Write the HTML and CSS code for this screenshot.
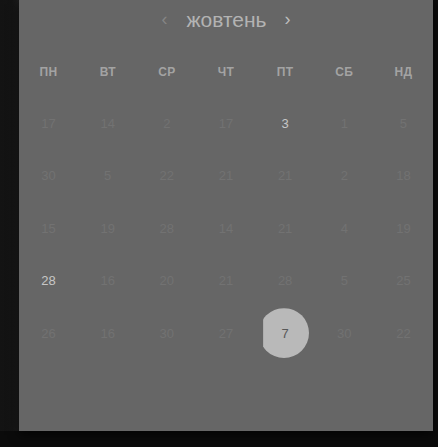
FILE: index.html
```html
<!DOCTYPE html>
<html lang="uk">
<head>
<meta charset="utf-8">
<link rel="stylesheet" href="styles.css">
</head>
<body>
<div class="stage">
  <div class="panel">
    <div class="header">
      <span class="nav prev">‹</span>
      <span class="title">жовтень</span>
      <span class="nav next">›</span>
    </div>
    <div class="weekdays">
      <span>ПН</span><span>ВТ</span><span>СР</span><span>ЧТ</span><span>ПТ</span><span>СБ</span><span>НД</span>
    </div>
    <div class="days">
      <span>17</span><span>14</span><span>2</span><span>17</span><span class="lit">3</span><span>1</span><span>5</span>
      <span>30</span><span>5</span><span>22</span><span>21</span><span>21</span><span>2</span><span>18</span>
      <span>15</span><span>19</span><span>28</span><span>14</span><span>21</span><span>4</span><span>19</span>
      <span class="lit">28</span><span>16</span><span>20</span><span>21</span><span>28</span><span>5</span><span>25</span>
      <span>26</span><span>16</span><span>30</span><span>27</span><span class="sel"><i class="dot"></i><b>7</b></span><span>30</span><span>22</span>
    </div>
  </div>
</div>
</body>
</html>
```
FILE: styles.css
```css
html, body {
  margin: 0;
  padding: 0;
  width: 438px;
  height: 447px;
  overflow: hidden;
  background: #0b0b0b;
  font-family: "Liberation Sans", Arial, sans-serif;
}
.stage {
  display: flex;
  height: 431px;
  background: linear-gradient(to right, #131313 0, #141414 12px, #1c1c1c 19px, #0b0b0b 19px);
}
.panel {
  margin-left: 19px;
  width: 414px;
  height: 431px;
  background: #666666;
  box-shadow: 0 4px 10px rgba(0,0,0,0.7);
  display: flex;
  flex-direction: column;
}
.header {
  display: flex;
  justify-content: center;
  align-items: center;
  height: 26px;
  margin-top: 7px;
}
.title {
  font-size: 21px;
  color: #b3b3b3;
  margin: 0 18px 0 19px;
  line-height: 26px;
}
.nav {
  font-size: 18px;
  line-height: 26px;
  margin-top: -3px;
}
.prev { color: #858585; }
.next { color: #bdbdbd; }
.weekdays {
  display: grid;
  grid-template-columns: repeat(7, 1fr);
  margin-top: 29px;
  height: 20px;
  align-items: center;
}
.weekdays span {
  text-align: center;
  font-size: 12px;
  font-weight: bold;
  color: #a3a3a3;
  letter-spacing: 0.3px;
}
.days {
  display: grid;
  grid-template-columns: repeat(7, 1fr);
  grid-auto-rows: 52.5px;
  margin-top: 15px;
}
.days span {
  display: flex;
  align-items: center;
  justify-content: center;
  font-size: 13px;
  color: #727272;
  position: relative;
}
.days span.lit { color: #c6c6c6; }
.days span.sel { color: #585858; }
.dot {
  position: absolute;
  width: 50px;
  height: 50px;
  border-radius: 50%;
  background: #b9b9b9;
  left: 50%;
  top: 50%;
  transform: translate(-52%, -50%);
  clip-path: inset(0 0 0 4px);
}
.sel b {
  position: relative;
  font-weight: normal;
}
```
